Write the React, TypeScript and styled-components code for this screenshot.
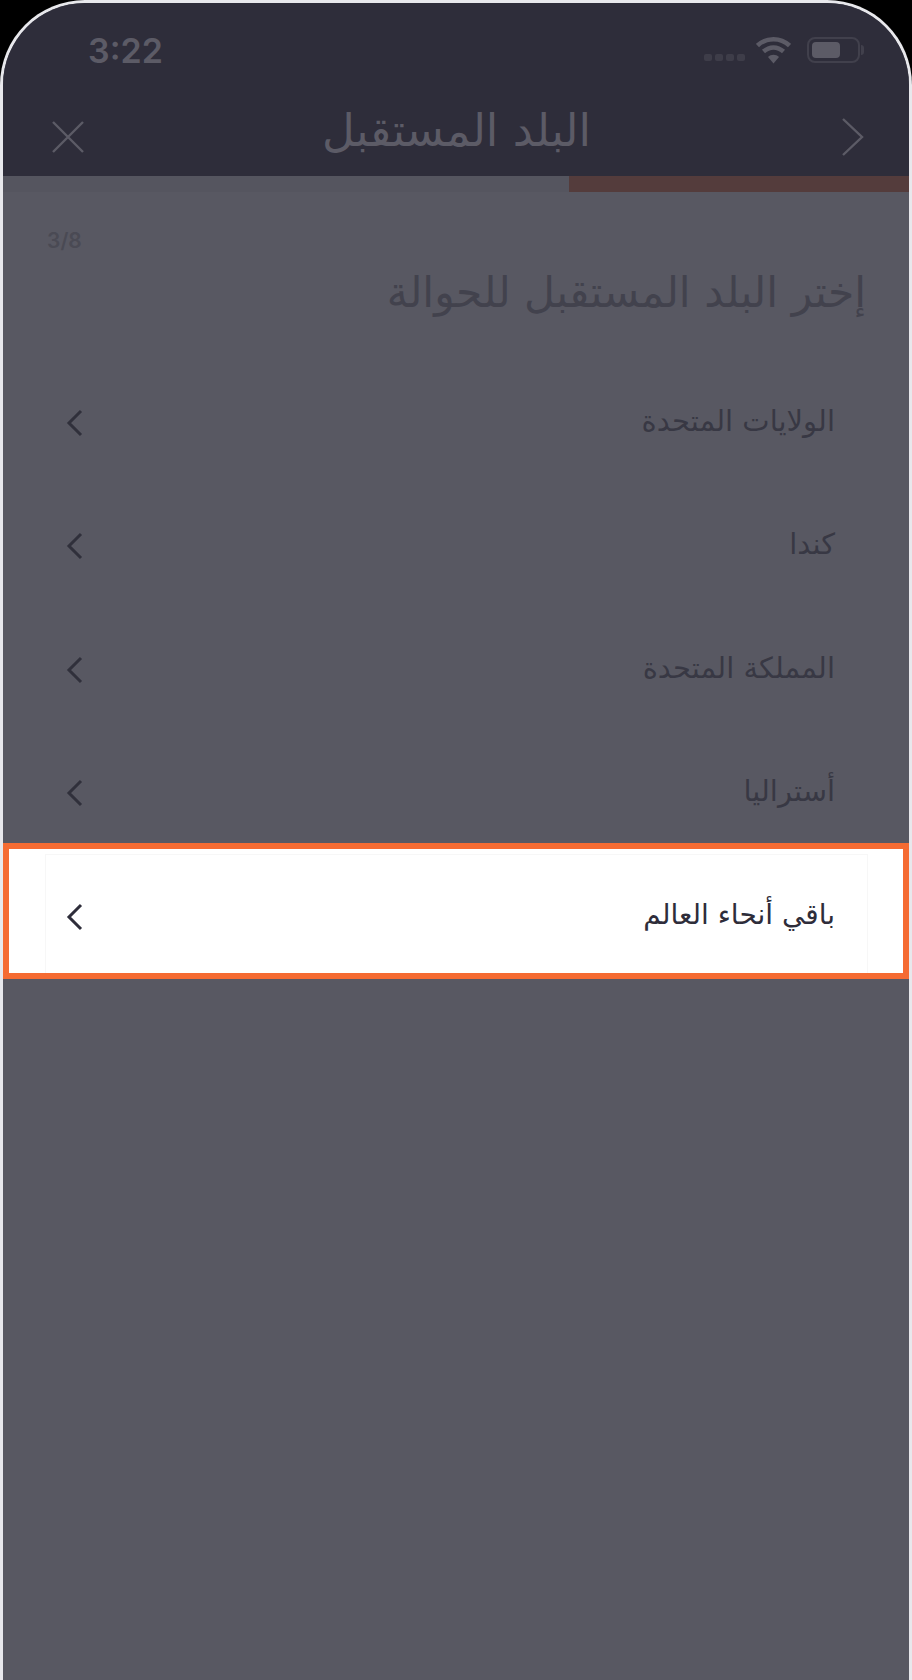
import styled, { createGlobalStyle } from 'styled-components';

const COUNTRIES = [
  'الولايات المتحدة',
  'كندا',
  'المملكة المتحدة',
  'أستراليا',
  'باقي أنحاء العالم',
];
const STEP = 3;
const TOTAL = 8;

const GlobalStyle = createGlobalStyle`
  html, body {
    margin: 0;
    height: 100%;
    background: #000;
    overflow: hidden;
  }
  * {
    box-sizing: border-box;
  }
`;

const App: React.FC = () => (
  <>
    <GlobalStyle />
    <Phone>
      <StatusBar dir="ltr">
        <Time>3:22</Time>
        <StatusIcons>
          <Signal>
            <Dot />
            <Dot />
            <Dot />
            <Dot />
          </Signal>
          <svg width="35" height="28" viewBox="0 0 35 28" fill="none">
            <path d="M1.5 9.5C10.5 1 24.5 1 33.5 9.5" stroke="#5c5b66" strokeWidth="4.5" />
            <path d="M7.5 15.5C13.5 10 21.5 10 27.5 15.5" stroke="#5c5b66" strokeWidth="4.5" />
            <path d="M12 21C15 18 20 18 23 21L17.5 27.5Z" fill="#5c5b66" />
          </svg>
          <Battery>
            <BatteryFill />
          </Battery>
        </StatusIcons>
      </StatusBar>
      <NavBar>
        <svg width="24" height="40" viewBox="0 0 24 40" fill="none">
          <path d="M2 2L21 20L2 38" stroke="#5c5b66" strokeWidth="2.4" />
        </svg>
        <NavTitle>البلد المستقبل</NavTitle>
        <svg width="32" height="32" viewBox="0 0 32 32" fill="none">
          <path d="M1 1L31 31M31 1L1 31" stroke="#5c5b66" strokeWidth="2.4" />
        </svg>
      </NavBar>
      <Progress>
        <ProgressFill style={{ width: `${(STEP / TOTAL) * 100}%` }} />
      </Progress>
      <Content>
        <StepCount dir="ltr">
          {STEP}/{TOTAL}
        </StepCount>
        <Heading>إختر البلد المستقبل للحوالة</Heading>
        <List>
          {COUNTRIES.map((name, i) => (
            <Row key={name} $active={i === COUNTRIES.length - 1}>
              <RowInner $active={i === COUNTRIES.length - 1}>
                <RowLabel $active={i === COUNTRIES.length - 1}>{name}</RowLabel>
                <svg width="18" height="28" viewBox="0 0 18 28" fill="none">
                  <path
                    d="M15 2L3 14L15 26"
                    stroke={i === COUNTRIES.length - 1 ? '#2e2d3a' : '#30303b'}
                    strokeWidth="3"
                  />
                </svg>
              </RowInner>
            </Row>
          ))}
        </List>
      </Content>
    </Phone>
  </>
);

const Phone = styled.div`
  display: flex;
  flex-direction: column;
  height: 100vh;
  border: 3px solid #e8e8ec;
  border-bottom: none;
  border-radius: 85px 85px 0 0;
  overflow: hidden;
  background: #585862;
  font-family: 'DejaVu Sans', 'Noto Sans', sans-serif;
`;
const StatusBar = styled.div`
  display: flex;
  align-items: center;
  justify-content: space-between;
  height: 87px;
  padding: 7px 49px 0 85px;
  background: #2e2d3a;
`;
const Time = styled.span`
  color: #5c5b66;
  font-family: Inter, 'Liberation Sans', sans-serif;
  font-size: 34px;
  font-weight: 600;
`;
const StatusIcons = styled.div`
  display: flex;
  align-items: center;
  gap: 16px;
`;
const Signal = styled.div`
  display: flex;
  gap: 3px;
  margin: 15px -5px 0 0;
`;
const Dot = styled.span`
  width: 8px;
  height: 7px;
  border-radius: 2px;
  background: #3e3d49;
`;
const Battery = styled.div`
  position: relative;
  width: 53px;
  height: 26px;
  padding: 3px;
  border: 2px solid #41404c;
  border-radius: 8px;

  &::after {
    content: '';
    position: absolute;
    top: 6px;
    right: -6px;
    width: 3px;
    height: 10px;
    border-radius: 0 3px 3px 0;
    background: #41404c;
  }
`;
const BatteryFill = styled.div`
  width: 28px;
  height: 100%;
  border-radius: 4px;
  background: #5c5b66;
`;
const NavBar = styled.div`
  display: flex;
  align-items: center;
  justify-content: space-between;
  height: 86px;
  padding: 8px 44px 0 49px;
  background: #2e2d3a;
  direction: rtl;
`;
const NavTitle = styled.h1`
  margin: 0 12px 12px 0;
  color: #5c5b66;
  font-size: 45px;
  font-weight: 400;
  line-height: 56px;
`;
const Progress = styled.div`
  display: flex;
  justify-content: flex-end;
  height: 16px;
  background: #55555f;
`;
const ProgressFill = styled.div`
  background: #543c3c;
`;
const Content = styled.div`
  flex: 1;
  display: flex;
  flex-direction: column;
`;
const StepCount = styled.div`
  height: 42px;
  padding: 37px 0 0 44px;
  color: #4a4a54;
  font-family: Inter, 'Liberation Sans', sans-serif;
  font-size: 21px;
  font-weight: 600;
  line-height: 24px;
`;
const Heading = styled.h2`
  margin: 0;
  padding: 35px 43px 0 0;
  height: 121px;
  color: #42424d;
  direction: rtl;
  font-size: 42.5px;
  font-weight: 400;
  line-height: 48px;
`;
const List = styled.div`
  display: flex;
  flex-direction: column;
  padding: 0 6px;
`;
const Row = styled.div<{ $active: boolean }>`
  height: 123.5px;
  padding: 5px 35px 0 36px;
  background: ${(p) => (p.$active ? '#fff' : 'transparent')};
  outline: ${(p) => (p.$active ? '6px solid #f56b32' : 'none')};
`;
const RowInner = styled.div<{ $active: boolean }>`
  display: flex;
  align-items: center;
  justify-content: space-between;
  height: 100%;
  padding: 6px 32px 0 20px;
  border: 1px solid ${(p) => (p.$active ? '#f7f7f7' : 'transparent')};
  border-bottom: none;
  direction: rtl;
`;
const RowLabel = styled.span<{ $active: boolean }>`
  margin-bottom: 4px;
  color: ${(p) => (p.$active ? '#2e2d3a' : '#383844')};
  font-size: ${(p) => (p.$active ? '28px' : '29px')};
`;

export default App;
